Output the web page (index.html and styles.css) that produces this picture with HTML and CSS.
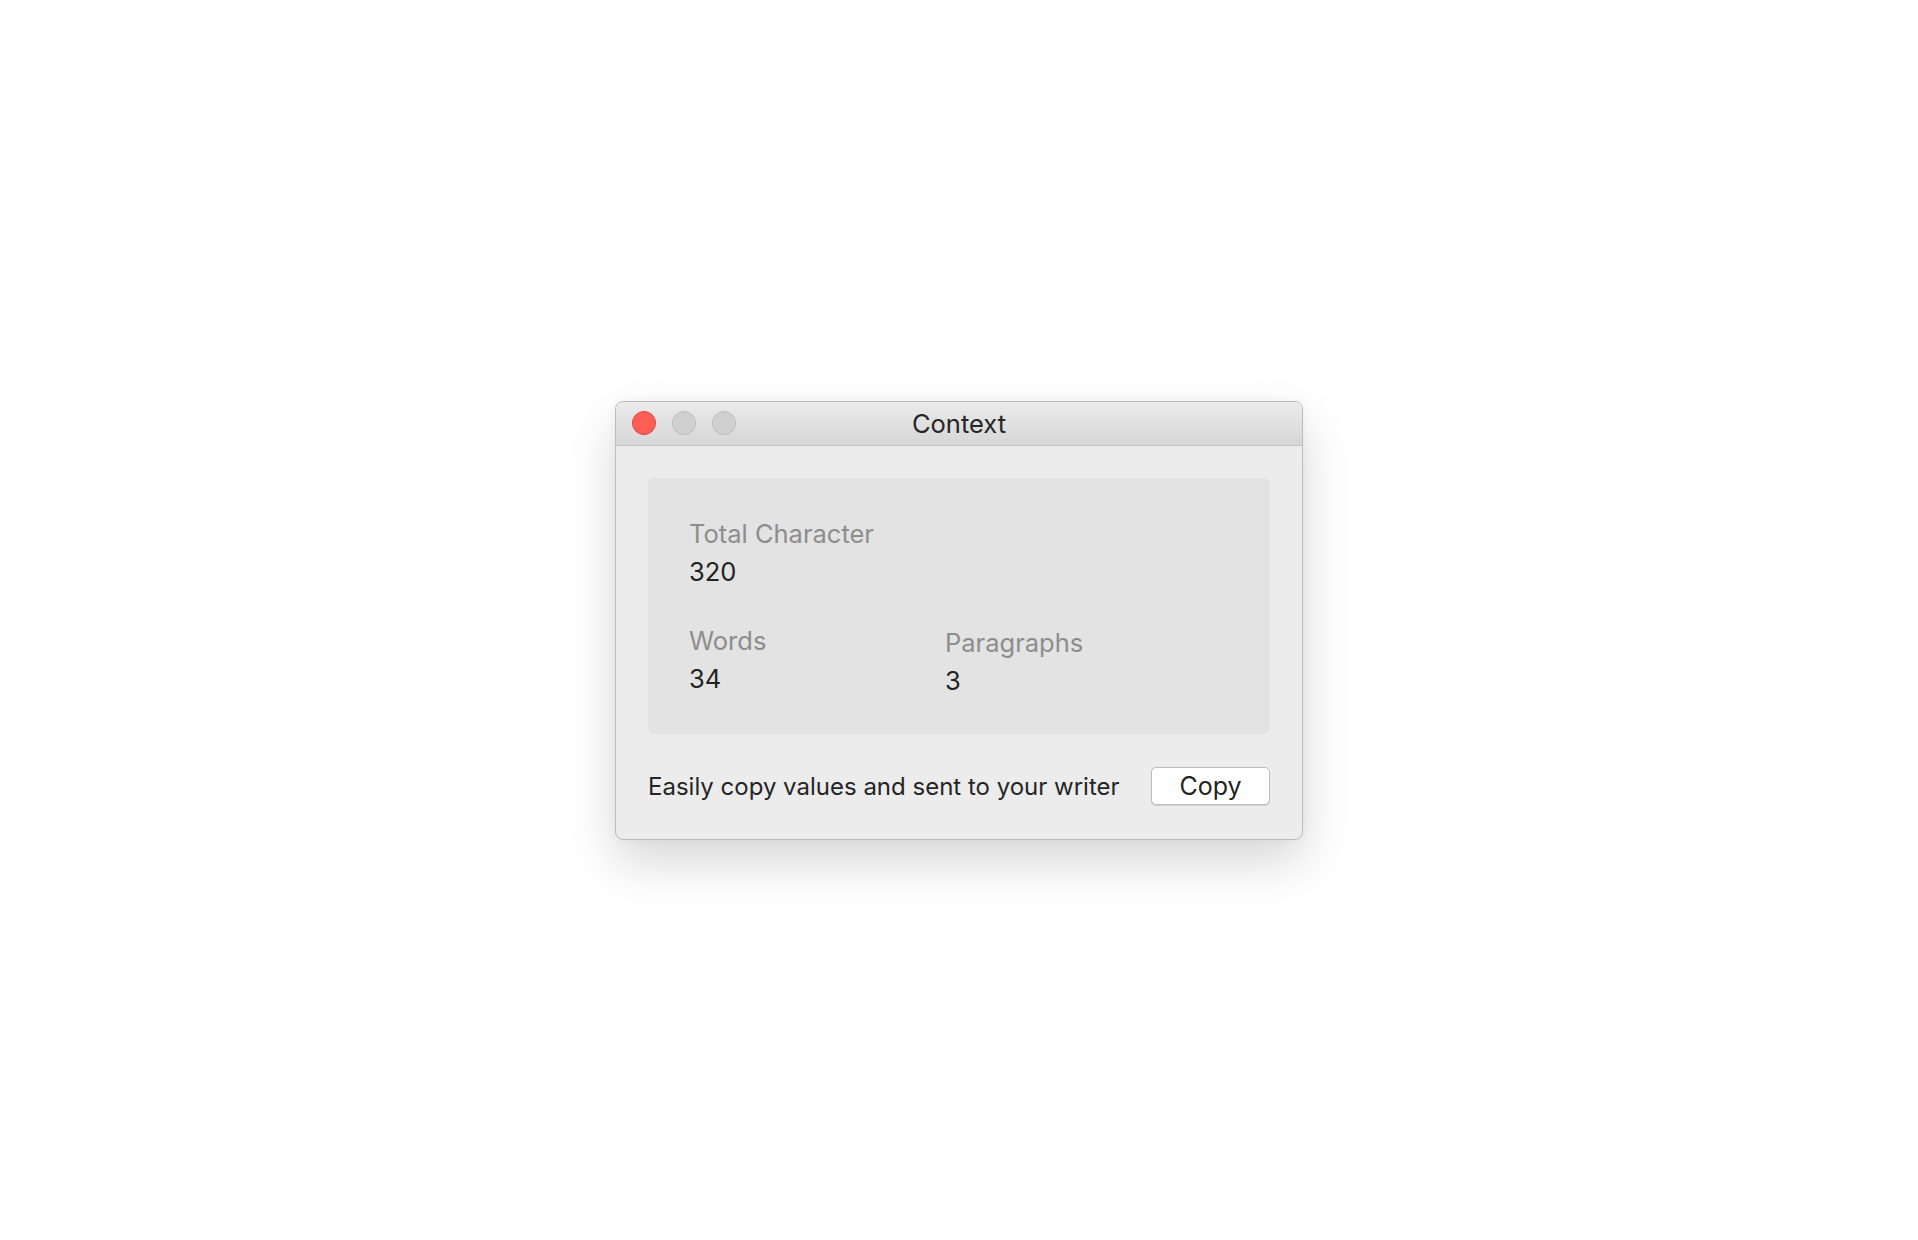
FILE: index.html
```html
<!DOCTYPE html>
<html lang="en">
<head>
<meta charset="utf-8">
<title>Context</title>
<link rel="stylesheet" href="styles.css">
</head>
<body>
<div class="window">
  <div class="titlebar">
    <div class="lights">
      <span class="light close"></span>
      <span class="light"></span>
      <span class="light"></span>
    </div>
    <div class="title">Context</div>
  </div>
  <div class="content">
    <div class="panel">
      <div class="stat">
        <div class="label">Total Character</div>
        <div class="value">320</div>
      </div>
      <div class="row">
        <div class="stat col">
          <div class="label">Words</div>
          <div class="value">34</div>
        </div>
        <div class="stat col shifted">
          <div class="label">Paragraphs</div>
          <div class="value">3</div>
        </div>
      </div>
    </div>
    <div class="footer">
      <span class="hint">Easily copy values and sent to your writer</span>
      <button class="btn">Copy</button>
    </div>
  </div>
</div>
</body>
</html>
```

FILE: styles.css
```css
html, body {
  margin: 0;
  padding: 0;
}
body {
  background: #ffffff;
  height: 100vh;
  display: flex;
  align-items: center;
  justify-content: center;
  font-family: "Inter", "Liberation Sans", sans-serif;
}
.window {
  width: 688px;
  box-sizing: border-box;
  border: 1px solid #bcbcbc;
  border-radius: 8px;
  background: #ececec;
  box-shadow: 0 22px 50px rgba(0, 0, 0, 0.16), 0 0 10px rgba(0, 0, 0, 0.04);
  overflow: hidden;
}
.titlebar {
  position: relative;
  height: 43px;
  border-bottom: 1px solid #c4c4c4;
  background: linear-gradient(#ebebeb, #d6d6d6);
  display: flex;
  align-items: center;
  padding-left: 16px;
}
.lights {
  display: flex;
  gap: 16px;
}
.light {
  width: 24px;
  height: 24px;
  box-sizing: border-box;
  border-radius: 50%;
  background: #d0d0d0;
  border: 1px solid #bdbdbd;
}
.light.close {
  background: #fd5f57;
  border-color: #e0443e;
}
.title {
  position: absolute;
  left: 0;
  right: 0;
  top: 0;
  bottom: 0;
  display: flex;
  align-items: center;
  justify-content: center;
  font-size: 25.5px;
  color: #262626;
}
.content {
  padding: 32px 32px 34px;
}
.panel {
  background: #e3e3e3;
  border-radius: 6px;
  height: 256px;
  box-sizing: border-box;
  padding: 41px 41px 0;
}
.row {
  display: flex;
  margin-top: 39px;
}
.col {
  width: 256px;
}
.shifted {
  padding-top: 2px;
}
.label {
  font-size: 25.5px;
  line-height: 30px;
  color: #8d8d8d;
}
.value {
  font-size: 25.5px;
  line-height: 30px;
  margin-top: 8px;
  color: #232323;
}
.footer {
  margin-top: 33px;
  display: flex;
  align-items: center;
  justify-content: space-between;
}
.hint {
  font-size: 24px;
  color: #252525;
  padding-top: 2px;
}
.btn {
  width: 119px;
  height: 38px;
  box-sizing: border-box;
  background: #ffffff;
  border: 1px solid #bcbcbc;
  border-radius: 5px;
  box-shadow: 0 1px 1px rgba(0, 0, 0, 0.12);
  font-family: inherit;
  font-size: 25px;
  color: #222222;
  padding: 0;
}
```
